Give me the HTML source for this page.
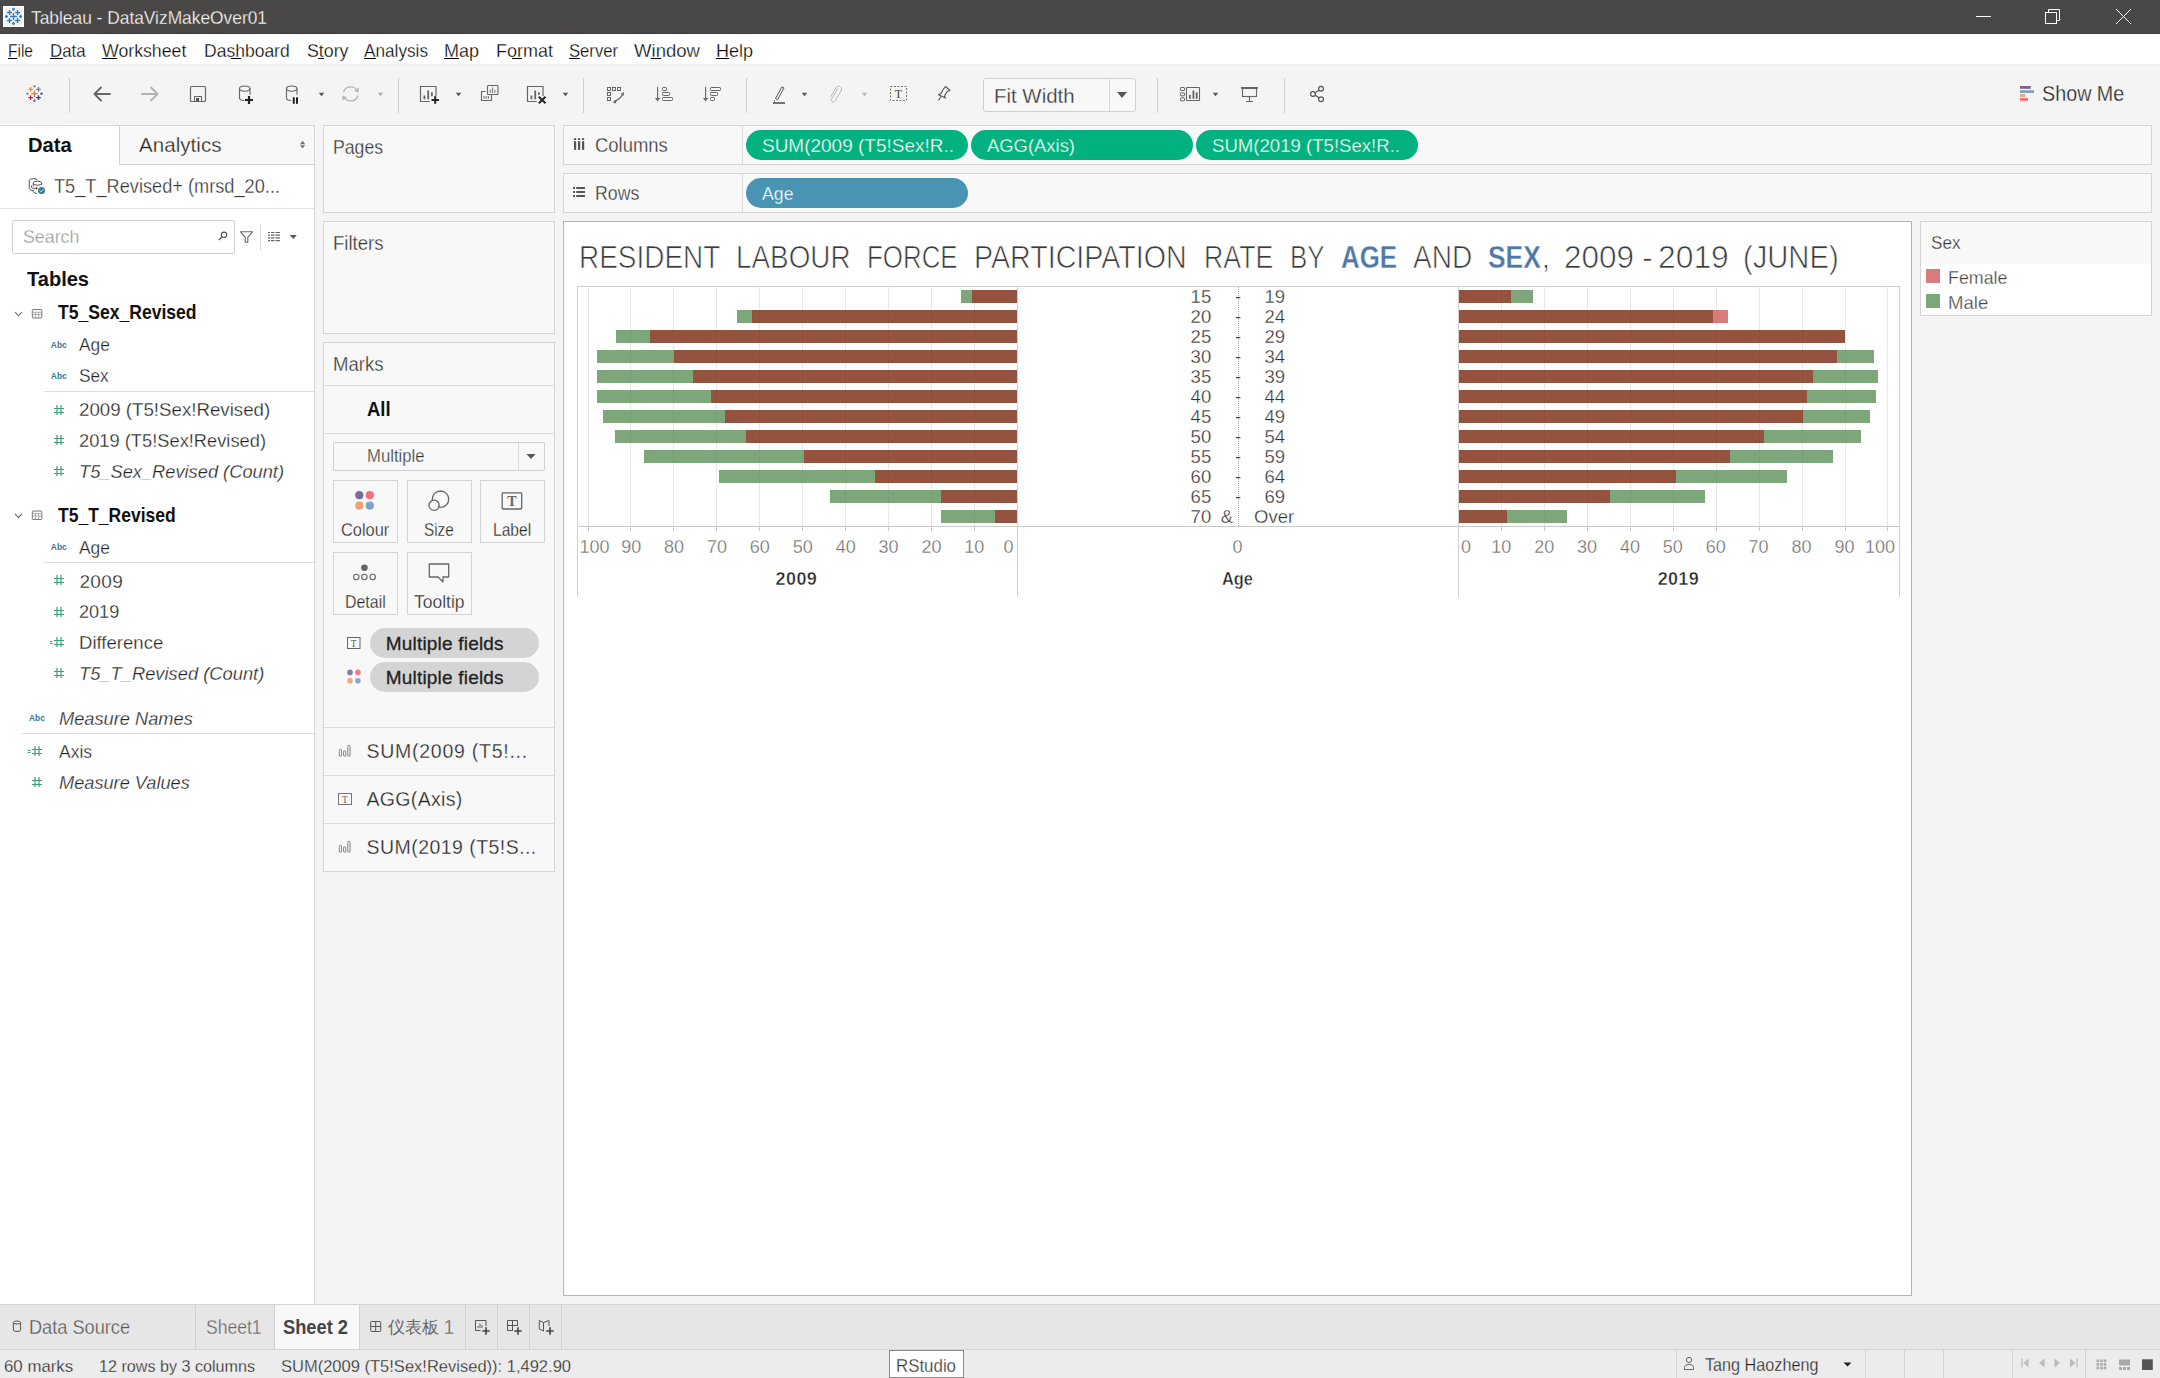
<!DOCTYPE html><html><head><meta charset="utf-8"><style>
html,body{margin:0;padding:0;}
body{width:2160px;height:1378px;overflow:hidden;position:relative;background:#f4f4f4;font-family:"Liberation Sans",sans-serif;}
.a{position:absolute;}
.t{position:absolute;white-space:nowrap;line-height:1;}
svg{position:absolute;overflow:visible;}
</style></head><body>
<div class="a" style="left:0px;top:0px;width:2160px;height:34px;background:#4a4846;"></div>
<div class="a" style="left:0px;top:33px;width:2160px;height:1px;background:#3d3b39;"></div>
<div class="a" style="left:0px;top:34px;width:2160px;height:30px;background:#ffffff;"></div>
<div class="a" style="left:0px;top:64px;width:2160px;height:1px;background:#efefef;"></div>
<div class="a" style="left:0px;top:65px;width:2160px;height:60px;background:#f4f4f4;"></div>
<div class="a" style="left:0px;top:125px;width:315px;height:1179px;background:#ffffff;"></div>
<div class="a" style="left:0px;top:125px;width:315px;height:1px;background:#d9d9d9;"></div>
<div class="a" style="left:314px;top:125px;width:1px;height:1179px;background:#d4d4d4;"></div>
<div class="a" style="left:119px;top:125px;width:196px;height:40px;background:#f8f8f8;border:1px solid #d4d4d4;box-sizing:border-box;"></div>
<div class="a" style="left:0px;top:208px;width:314px;height:1px;background:#e3e3e3;"></div>
<div class="a" style="left:12px;top:220px;width:223px;height:34px;background:#ffffff;border:1px solid #d0d0d0;box-sizing:border-box;border-radius:2px;"></div>
<div class="a" style="left:260px;top:224px;width:1px;height:26px;background:#d6d6d6;"></div>
<div class="a" style="left:44px;top:391px;width:270px;height:1px;background:#e0e0e0;"></div>
<div class="a" style="left:44px;top:562px;width:270px;height:1px;background:#e0e0e0;"></div>
<div class="a" style="left:22px;top:733px;width:292px;height:1px;background:#e0e0e0;"></div>
<div class="a" style="left:323px;top:125px;width:232px;height:88px;background:#f8f8f8;border:1px solid #d4d4d4;box-sizing:border-box;"></div>
<div class="a" style="left:323px;top:221px;width:232px;height:113px;background:#f8f8f8;border:1px solid #d4d4d4;box-sizing:border-box;"></div>
<div class="a" style="left:323px;top:342px;width:232px;height:530px;background:#f8f8f8;border:1px solid #d4d4d4;box-sizing:border-box;"></div>
<div class="a" style="left:324px;top:385px;width:230px;height:1px;background:#dcdcdc;"></div>
<div class="a" style="left:324px;top:433px;width:230px;height:1px;background:#dcdcdc;"></div>
<div class="a" style="left:324px;top:727px;width:230px;height:1px;background:#dcdcdc;"></div>
<div class="a" style="left:324px;top:775px;width:230px;height:1px;background:#dcdcdc;"></div>
<div class="a" style="left:324px;top:823px;width:230px;height:1px;background:#dcdcdc;"></div>
<div class="a" style="left:333px;top:442px;width:212px;height:29px;background:#f8f8f8;border:1px solid #cfcfcf;box-sizing:border-box;border-radius:2px;"></div>
<div class="a" style="left:518px;top:443px;width:1px;height:27px;background:#dcdcdc;"></div>
<div class="a" style="left:333px;top:480px;width:65px;height:63px;background:#f8f8f8;border:1px solid #d4d4d4;box-sizing:border-box;"></div>
<div class="a" style="left:407px;top:480px;width:65px;height:63px;background:#f8f8f8;border:1px solid #d4d4d4;box-sizing:border-box;"></div>
<div class="a" style="left:480px;top:480px;width:65px;height:63px;background:#f8f8f8;border:1px solid #d4d4d4;box-sizing:border-box;"></div>
<div class="a" style="left:333px;top:552px;width:65px;height:63px;background:#f8f8f8;border:1px solid #d4d4d4;box-sizing:border-box;"></div>
<div class="a" style="left:407px;top:552px;width:65px;height:63px;background:#f8f8f8;border:1px solid #d4d4d4;box-sizing:border-box;"></div>
<div class="a" style="left:370px;top:628px;width:169px;height:30px;background:#d4d4d4;border-radius:15px;"></div>
<div class="a" style="left:370px;top:662px;width:169px;height:30px;background:#d4d4d4;border-radius:15px;"></div>
<div class="a" style="left:563px;top:125px;width:1589px;height:40px;background:#f8f8f8;border:1px solid #d4d4d4;box-sizing:border-box;"></div>
<div class="a" style="left:742px;top:126px;width:1px;height:38px;background:#dcdcdc;"></div>
<div class="a" style="left:563px;top:173px;width:1589px;height:40px;background:#f8f8f8;border:1px solid #d4d4d4;box-sizing:border-box;"></div>
<div class="a" style="left:742px;top:174px;width:1px;height:38px;background:#dcdcdc;"></div>
<div class="a" style="left:746px;top:130px;width:222px;height:30px;background:#02b180;border-radius:15px;"></div>
<div class="a" style="left:971px;top:130px;width:222px;height:30px;background:#02b180;border-radius:15px;"></div>
<div class="a" style="left:1196px;top:130px;width:222px;height:30px;background:#02b180;border-radius:15px;"></div>
<div class="a" style="left:746px;top:178px;width:222px;height:30px;background:#4a94b3;border-radius:15px;"></div>
<div class="a" style="left:563px;top:221px;width:1349px;height:1075px;background:#ffffff;border:1px solid #b4b4b4;box-sizing:border-box;"></div>
<div class="a" style="left:1920px;top:221px;width:232px;height:95px;background:#ffffff;border:1px solid #d4d4d4;box-sizing:border-box;"></div>
<div class="a" style="left:1921px;top:222px;width:230px;height:42px;background:#f8f8f8;"></div>
<div class="a" style="left:0px;top:1304px;width:2160px;height:45px;background:#e6e6e6;"></div>
<div class="a" style="left:0px;top:1304px;width:2160px;height:1px;background:#d4d4d4;"></div>
<div class="a" style="left:275px;top:1305px;width:84px;height:44px;background:#f8f8f8;"></div>
<div class="a" style="left:195px;top:1305px;width:1px;height:44px;background:#d0d0d0;"></div>
<div class="a" style="left:274px;top:1305px;width:1px;height:44px;background:#d0d0d0;"></div>
<div class="a" style="left:359px;top:1305px;width:1px;height:44px;background:#d0d0d0;"></div>
<div class="a" style="left:465px;top:1305px;width:1px;height:44px;background:#d0d0d0;"></div>
<div class="a" style="left:497px;top:1305px;width:1px;height:44px;background:#d0d0d0;"></div>
<div class="a" style="left:529px;top:1305px;width:1px;height:44px;background:#d0d0d0;"></div>
<div class="a" style="left:561px;top:1305px;width:1px;height:44px;background:#d0d0d0;"></div>
<div class="a" style="left:0px;top:1349px;width:2160px;height:29px;background:#ececec;"></div>
<div class="a" style="left:0px;top:1349px;width:2160px;height:1px;background:#d4d4d4;"></div>
<div class="a" style="left:1676px;top:1350px;width:1px;height:28px;background:#d4d4d4;"></div>
<div class="a" style="left:1865px;top:1350px;width:1px;height:28px;background:#d4d4d4;"></div>
<div class="a" style="left:1904px;top:1350px;width:1px;height:28px;background:#d4d4d4;"></div>
<div class="a" style="left:1943px;top:1350px;width:1px;height:28px;background:#d4d4d4;"></div>
<div class="a" style="left:2012px;top:1350px;width:1px;height:28px;background:#d4d4d4;"></div>
<div class="a" style="left:2085px;top:1350px;width:1px;height:28px;background:#d4d4d4;"></div>
<div class="a" style="left:889px;top:1350px;width:75px;height:28px;background:#ffffff;border:1px solid #8a8a8a;box-sizing:border-box;"></div>
<div class="a" style="left:974px;top:287px;width:1px;height:240px;background:#f1f1f1;"></div>
<div class="a" style="left:1501px;top:287px;width:1px;height:240px;background:#f1f1f1;"></div>
<div class="a" style="left:931px;top:287px;width:1px;height:240px;background:#f1f1f1;"></div>
<div class="a" style="left:1544px;top:287px;width:1px;height:240px;background:#f1f1f1;"></div>
<div class="a" style="left:888px;top:287px;width:1px;height:240px;background:#f1f1f1;"></div>
<div class="a" style="left:1587px;top:287px;width:1px;height:240px;background:#f1f1f1;"></div>
<div class="a" style="left:845px;top:287px;width:1px;height:240px;background:#f1f1f1;"></div>
<div class="a" style="left:1630px;top:287px;width:1px;height:240px;background:#f1f1f1;"></div>
<div class="a" style="left:802px;top:287px;width:1px;height:240px;background:#f1f1f1;"></div>
<div class="a" style="left:1673px;top:287px;width:1px;height:240px;background:#f1f1f1;"></div>
<div class="a" style="left:759px;top:287px;width:1px;height:240px;background:#f1f1f1;"></div>
<div class="a" style="left:1716px;top:287px;width:1px;height:240px;background:#f1f1f1;"></div>
<div class="a" style="left:716px;top:287px;width:1px;height:240px;background:#f1f1f1;"></div>
<div class="a" style="left:1759px;top:287px;width:1px;height:240px;background:#f1f1f1;"></div>
<div class="a" style="left:673px;top:287px;width:1px;height:240px;background:#f1f1f1;"></div>
<div class="a" style="left:1802px;top:287px;width:1px;height:240px;background:#f1f1f1;"></div>
<div class="a" style="left:630px;top:287px;width:1px;height:240px;background:#f1f1f1;"></div>
<div class="a" style="left:1845px;top:287px;width:1px;height:240px;background:#f1f1f1;"></div>
<div class="a" style="left:588px;top:287px;width:1px;height:240px;background:#f1f1f1;"></div>
<div class="a" style="left:1887px;top:287px;width:1px;height:240px;background:#f1f1f1;"></div>
<div class="a" style="left:961px;top:290px;width:11px;height:13px;background:#7da77b;"></div>
<div class="a" style="left:972px;top:290px;width:45px;height:13px;background:#93533f;"></div>
<div class="a" style="left:737px;top:310px;width:15px;height:13px;background:#7da77b;"></div>
<div class="a" style="left:752px;top:310px;width:265px;height:13px;background:#93533f;"></div>
<div class="a" style="left:616px;top:330px;width:34px;height:13px;background:#7da77b;"></div>
<div class="a" style="left:650px;top:330px;width:367px;height:13px;background:#93533f;"></div>
<div class="a" style="left:597px;top:350px;width:77px;height:13px;background:#7da77b;"></div>
<div class="a" style="left:674px;top:350px;width:343px;height:13px;background:#93533f;"></div>
<div class="a" style="left:597px;top:370px;width:96px;height:13px;background:#7da77b;"></div>
<div class="a" style="left:693px;top:370px;width:324px;height:13px;background:#93533f;"></div>
<div class="a" style="left:597px;top:390px;width:114px;height:13px;background:#7da77b;"></div>
<div class="a" style="left:711px;top:390px;width:306px;height:13px;background:#93533f;"></div>
<div class="a" style="left:603px;top:410px;width:122px;height:13px;background:#7da77b;"></div>
<div class="a" style="left:725px;top:410px;width:292px;height:13px;background:#93533f;"></div>
<div class="a" style="left:615px;top:430px;width:131px;height:13px;background:#7da77b;"></div>
<div class="a" style="left:746px;top:430px;width:271px;height:13px;background:#93533f;"></div>
<div class="a" style="left:644px;top:450px;width:160px;height:13px;background:#7da77b;"></div>
<div class="a" style="left:804px;top:450px;width:213px;height:13px;background:#93533f;"></div>
<div class="a" style="left:719px;top:470px;width:156px;height:13px;background:#7da77b;"></div>
<div class="a" style="left:875px;top:470px;width:142px;height:13px;background:#93533f;"></div>
<div class="a" style="left:830px;top:490px;width:111px;height:13px;background:#7da77b;"></div>
<div class="a" style="left:941px;top:490px;width:76px;height:13px;background:#93533f;"></div>
<div class="a" style="left:941px;top:510px;width:54px;height:13px;background:#7da77b;"></div>
<div class="a" style="left:995px;top:510px;width:22px;height:13px;background:#93533f;"></div>
<div class="a" style="left:1459px;top:290px;width:52px;height:13px;background:#93533f;"></div>
<div class="a" style="left:1511px;top:290px;width:22px;height:13px;background:#7da77b;"></div>
<div class="a" style="left:1459px;top:310px;width:254px;height:13px;background:#93533f;"></div>
<div class="a" style="left:1713px;top:310px;width:15px;height:13px;background:#d87b7c;"></div>
<div class="a" style="left:1459px;top:330px;width:386px;height:13px;background:#93533f;"></div>
<div class="a" style="left:1459px;top:350px;width:378px;height:13px;background:#93533f;"></div>
<div class="a" style="left:1837px;top:350px;width:37px;height:13px;background:#7da77b;"></div>
<div class="a" style="left:1459px;top:370px;width:354px;height:13px;background:#93533f;"></div>
<div class="a" style="left:1813px;top:370px;width:65px;height:13px;background:#7da77b;"></div>
<div class="a" style="left:1459px;top:390px;width:348px;height:13px;background:#93533f;"></div>
<div class="a" style="left:1807px;top:390px;width:69px;height:13px;background:#7da77b;"></div>
<div class="a" style="left:1459px;top:410px;width:344px;height:13px;background:#93533f;"></div>
<div class="a" style="left:1803px;top:410px;width:67px;height:13px;background:#7da77b;"></div>
<div class="a" style="left:1459px;top:430px;width:305px;height:13px;background:#93533f;"></div>
<div class="a" style="left:1764px;top:430px;width:97px;height:13px;background:#7da77b;"></div>
<div class="a" style="left:1459px;top:450px;width:271px;height:13px;background:#93533f;"></div>
<div class="a" style="left:1730px;top:450px;width:103px;height:13px;background:#7da77b;"></div>
<div class="a" style="left:1459px;top:470px;width:217px;height:13px;background:#93533f;"></div>
<div class="a" style="left:1676px;top:470px;width:111px;height:13px;background:#7da77b;"></div>
<div class="a" style="left:1459px;top:490px;width:151px;height:13px;background:#93533f;"></div>
<div class="a" style="left:1610px;top:490px;width:95px;height:13px;background:#7da77b;"></div>
<div class="a" style="left:1459px;top:510px;width:48px;height:13px;background:#93533f;"></div>
<div class="a" style="left:1507px;top:510px;width:60px;height:13px;background:#7da77b;"></div>
<div class="a" style="left:974px;top:287px;width:1px;height:240px;background:rgba(0,0,0,0.03);"></div>
<div class="a" style="left:1501px;top:287px;width:1px;height:240px;background:rgba(0,0,0,0.03);"></div>
<div class="a" style="left:931px;top:287px;width:1px;height:240px;background:rgba(0,0,0,0.03);"></div>
<div class="a" style="left:1544px;top:287px;width:1px;height:240px;background:rgba(0,0,0,0.03);"></div>
<div class="a" style="left:888px;top:287px;width:1px;height:240px;background:rgba(0,0,0,0.03);"></div>
<div class="a" style="left:1587px;top:287px;width:1px;height:240px;background:rgba(0,0,0,0.03);"></div>
<div class="a" style="left:845px;top:287px;width:1px;height:240px;background:rgba(0,0,0,0.03);"></div>
<div class="a" style="left:1630px;top:287px;width:1px;height:240px;background:rgba(0,0,0,0.03);"></div>
<div class="a" style="left:802px;top:287px;width:1px;height:240px;background:rgba(0,0,0,0.03);"></div>
<div class="a" style="left:1673px;top:287px;width:1px;height:240px;background:rgba(0,0,0,0.03);"></div>
<div class="a" style="left:759px;top:287px;width:1px;height:240px;background:rgba(0,0,0,0.03);"></div>
<div class="a" style="left:1716px;top:287px;width:1px;height:240px;background:rgba(0,0,0,0.03);"></div>
<div class="a" style="left:716px;top:287px;width:1px;height:240px;background:rgba(0,0,0,0.03);"></div>
<div class="a" style="left:1759px;top:287px;width:1px;height:240px;background:rgba(0,0,0,0.03);"></div>
<div class="a" style="left:673px;top:287px;width:1px;height:240px;background:rgba(0,0,0,0.03);"></div>
<div class="a" style="left:1802px;top:287px;width:1px;height:240px;background:rgba(0,0,0,0.03);"></div>
<div class="a" style="left:630px;top:287px;width:1px;height:240px;background:rgba(0,0,0,0.03);"></div>
<div class="a" style="left:1845px;top:287px;width:1px;height:240px;background:rgba(0,0,0,0.03);"></div>
<div class="a" style="left:588px;top:287px;width:1px;height:240px;background:rgba(0,0,0,0.03);"></div>
<div class="a" style="left:1887px;top:287px;width:1px;height:240px;background:rgba(0,0,0,0.03);"></div>
<div class="a" style="left:577px;top:286px;width:1323px;height:1px;background:#d0d0d0;"></div>
<div class="a" style="left:577px;top:526px;width:1323px;height:1px;background:#c8c8c8;"></div>
<div class="a" style="left:577px;top:286px;width:1px;height:311px;background:#d0d0d0;"></div>
<div class="a" style="left:1017px;top:286px;width:1px;height:311px;background:#d0d0d0;"></div>
<div class="a" style="left:1458px;top:286px;width:1px;height:311px;background:#d0d0d0;"></div>
<div class="a" style="left:1899px;top:286px;width:1px;height:311px;background:#d0d0d0;"></div>
<div class="a" style="left:1017px;top:527px;width:1px;height:4px;background:#c8c8c8;"></div>
<div class="a" style="left:1458px;top:527px;width:1px;height:4px;background:#c8c8c8;"></div>
<div class="a" style="left:974px;top:527px;width:1px;height:4px;background:#c8c8c8;"></div>
<div class="a" style="left:1501px;top:527px;width:1px;height:4px;background:#c8c8c8;"></div>
<div class="a" style="left:931px;top:527px;width:1px;height:4px;background:#c8c8c8;"></div>
<div class="a" style="left:1544px;top:527px;width:1px;height:4px;background:#c8c8c8;"></div>
<div class="a" style="left:888px;top:527px;width:1px;height:4px;background:#c8c8c8;"></div>
<div class="a" style="left:1587px;top:527px;width:1px;height:4px;background:#c8c8c8;"></div>
<div class="a" style="left:845px;top:527px;width:1px;height:4px;background:#c8c8c8;"></div>
<div class="a" style="left:1630px;top:527px;width:1px;height:4px;background:#c8c8c8;"></div>
<div class="a" style="left:802px;top:527px;width:1px;height:4px;background:#c8c8c8;"></div>
<div class="a" style="left:1673px;top:527px;width:1px;height:4px;background:#c8c8c8;"></div>
<div class="a" style="left:759px;top:527px;width:1px;height:4px;background:#c8c8c8;"></div>
<div class="a" style="left:1716px;top:527px;width:1px;height:4px;background:#c8c8c8;"></div>
<div class="a" style="left:716px;top:527px;width:1px;height:4px;background:#c8c8c8;"></div>
<div class="a" style="left:1759px;top:527px;width:1px;height:4px;background:#c8c8c8;"></div>
<div class="a" style="left:673px;top:527px;width:1px;height:4px;background:#c8c8c8;"></div>
<div class="a" style="left:1802px;top:527px;width:1px;height:4px;background:#c8c8c8;"></div>
<div class="a" style="left:630px;top:527px;width:1px;height:4px;background:#c8c8c8;"></div>
<div class="a" style="left:1845px;top:527px;width:1px;height:4px;background:#c8c8c8;"></div>
<div class="a" style="left:588px;top:527px;width:1px;height:4px;background:#c8c8c8;"></div>
<div class="a" style="left:1887px;top:527px;width:1px;height:4px;background:#c8c8c8;"></div>
<div class="a" style="left:1238px;top:287px;width:0;height:239px;border-left:1px dotted #b0b0b0;"></div>
<div class="t" style="left:1190.62px;top:287.64px;font-size:18.5px;color:#333;-webkit-text-stroke:0.3px #ffffff;">15</div>
<div class="t" style="left:1234.92px;top:287.64px;font-size:18.5px;color:#333;-webkit-text-stroke:0.3px #ffffff;">-</div>
<div class="t" style="left:1264.50px;top:287.64px;font-size:18.5px;color:#333;-webkit-text-stroke:0.3px #ffffff;">19</div>
<div class="t" style="left:1190.62px;top:307.64px;font-size:18.5px;color:#333;-webkit-text-stroke:0.3px #ffffff;">20</div>
<div class="t" style="left:1234.92px;top:307.64px;font-size:18.5px;color:#333;-webkit-text-stroke:0.3px #ffffff;">-</div>
<div class="t" style="left:1264.50px;top:307.64px;font-size:18.5px;color:#333;-webkit-text-stroke:0.3px #ffffff;">24</div>
<div class="t" style="left:1190.62px;top:327.64px;font-size:18.5px;color:#333;-webkit-text-stroke:0.3px #ffffff;">25</div>
<div class="t" style="left:1234.92px;top:327.64px;font-size:18.5px;color:#333;-webkit-text-stroke:0.3px #ffffff;">-</div>
<div class="t" style="left:1264.50px;top:327.64px;font-size:18.5px;color:#333;-webkit-text-stroke:0.3px #ffffff;">29</div>
<div class="t" style="left:1190.62px;top:347.64px;font-size:18.5px;color:#333;-webkit-text-stroke:0.3px #ffffff;">30</div>
<div class="t" style="left:1234.92px;top:347.64px;font-size:18.5px;color:#333;-webkit-text-stroke:0.3px #ffffff;">-</div>
<div class="t" style="left:1264.50px;top:347.64px;font-size:18.5px;color:#333;-webkit-text-stroke:0.3px #ffffff;">34</div>
<div class="t" style="left:1190.62px;top:367.64px;font-size:18.5px;color:#333;-webkit-text-stroke:0.3px #ffffff;">35</div>
<div class="t" style="left:1234.92px;top:367.64px;font-size:18.5px;color:#333;-webkit-text-stroke:0.3px #ffffff;">-</div>
<div class="t" style="left:1264.50px;top:367.64px;font-size:18.5px;color:#333;-webkit-text-stroke:0.3px #ffffff;">39</div>
<div class="t" style="left:1190.62px;top:387.64px;font-size:18.5px;color:#333;-webkit-text-stroke:0.3px #ffffff;">40</div>
<div class="t" style="left:1234.92px;top:387.64px;font-size:18.5px;color:#333;-webkit-text-stroke:0.3px #ffffff;">-</div>
<div class="t" style="left:1264.50px;top:387.64px;font-size:18.5px;color:#333;-webkit-text-stroke:0.3px #ffffff;">44</div>
<div class="t" style="left:1190.62px;top:407.64px;font-size:18.5px;color:#333;-webkit-text-stroke:0.3px #ffffff;">45</div>
<div class="t" style="left:1234.92px;top:407.64px;font-size:18.5px;color:#333;-webkit-text-stroke:0.3px #ffffff;">-</div>
<div class="t" style="left:1264.50px;top:407.64px;font-size:18.5px;color:#333;-webkit-text-stroke:0.3px #ffffff;">49</div>
<div class="t" style="left:1190.62px;top:427.64px;font-size:18.5px;color:#333;-webkit-text-stroke:0.3px #ffffff;">50</div>
<div class="t" style="left:1234.92px;top:427.64px;font-size:18.5px;color:#333;-webkit-text-stroke:0.3px #ffffff;">-</div>
<div class="t" style="left:1264.50px;top:427.64px;font-size:18.5px;color:#333;-webkit-text-stroke:0.3px #ffffff;">54</div>
<div class="t" style="left:1190.62px;top:447.64px;font-size:18.5px;color:#333;-webkit-text-stroke:0.3px #ffffff;">55</div>
<div class="t" style="left:1234.92px;top:447.64px;font-size:18.5px;color:#333;-webkit-text-stroke:0.3px #ffffff;">-</div>
<div class="t" style="left:1264.50px;top:447.64px;font-size:18.5px;color:#333;-webkit-text-stroke:0.3px #ffffff;">59</div>
<div class="t" style="left:1190.62px;top:467.64px;font-size:18.5px;color:#333;-webkit-text-stroke:0.3px #ffffff;">60</div>
<div class="t" style="left:1234.92px;top:467.64px;font-size:18.5px;color:#333;-webkit-text-stroke:0.3px #ffffff;">-</div>
<div class="t" style="left:1264.50px;top:467.64px;font-size:18.5px;color:#333;-webkit-text-stroke:0.3px #ffffff;">64</div>
<div class="t" style="left:1190.62px;top:487.64px;font-size:18.5px;color:#333;-webkit-text-stroke:0.3px #ffffff;">65</div>
<div class="t" style="left:1234.92px;top:487.64px;font-size:18.5px;color:#333;-webkit-text-stroke:0.3px #ffffff;">-</div>
<div class="t" style="left:1264.50px;top:487.64px;font-size:18.5px;color:#333;-webkit-text-stroke:0.3px #ffffff;">69</div>
<div class="t" style="left:1190.62px;top:507.64px;font-size:18.5px;color:#333;-webkit-text-stroke:0.3px #ffffff;">70</div>
<div class="t" style="left:1220.83px;top:507.64px;font-size:18.5px;color:#333;-webkit-text-stroke:0.3px #ffffff;">&amp;</div>
<div class="t" style="left:1254.00px;top:507.64px;font-size:18.5px;color:#333;-webkit-text-stroke:0.3px #ffffff;">Over</div>
<div class="t" style="left:1003.39px;top:538.06px;font-size:18px;color:#6e6e6e;-webkit-text-stroke:0.3px #ffffff;">0</div>
<div class="t" style="left:1461.00px;top:538.06px;font-size:18px;color:#6e6e6e;-webkit-text-stroke:0.3px #ffffff;">0</div>
<div class="t" style="left:964.30px;top:538.06px;font-size:18px;color:#6e6e6e;-webkit-text-stroke:0.3px #ffffff;">10</div>
<div class="t" style="left:1491.28px;top:538.06px;font-size:18px;color:#6e6e6e;-webkit-text-stroke:0.3px #ffffff;">10</div>
<div class="t" style="left:921.41px;top:538.06px;font-size:18px;color:#6e6e6e;-webkit-text-stroke:0.3px #ffffff;">20</div>
<div class="t" style="left:1534.17px;top:538.06px;font-size:18px;color:#6e6e6e;-webkit-text-stroke:0.3px #ffffff;">20</div>
<div class="t" style="left:878.52px;top:538.06px;font-size:18px;color:#6e6e6e;-webkit-text-stroke:0.3px #ffffff;">30</div>
<div class="t" style="left:1577.06px;top:538.06px;font-size:18px;color:#6e6e6e;-webkit-text-stroke:0.3px #ffffff;">30</div>
<div class="t" style="left:835.63px;top:538.06px;font-size:18px;color:#6e6e6e;-webkit-text-stroke:0.3px #ffffff;">40</div>
<div class="t" style="left:1619.95px;top:538.06px;font-size:18px;color:#6e6e6e;-webkit-text-stroke:0.3px #ffffff;">40</div>
<div class="t" style="left:792.74px;top:538.06px;font-size:18px;color:#6e6e6e;-webkit-text-stroke:0.3px #ffffff;">50</div>
<div class="t" style="left:1662.84px;top:538.06px;font-size:18px;color:#6e6e6e;-webkit-text-stroke:0.3px #ffffff;">50</div>
<div class="t" style="left:749.85px;top:538.06px;font-size:18px;color:#6e6e6e;-webkit-text-stroke:0.3px #ffffff;">60</div>
<div class="t" style="left:1705.73px;top:538.06px;font-size:18px;color:#6e6e6e;-webkit-text-stroke:0.3px #ffffff;">60</div>
<div class="t" style="left:706.96px;top:538.06px;font-size:18px;color:#6e6e6e;-webkit-text-stroke:0.3px #ffffff;">70</div>
<div class="t" style="left:1748.62px;top:538.06px;font-size:18px;color:#6e6e6e;-webkit-text-stroke:0.3px #ffffff;">70</div>
<div class="t" style="left:664.07px;top:538.06px;font-size:18px;color:#6e6e6e;-webkit-text-stroke:0.3px #ffffff;">80</div>
<div class="t" style="left:1791.51px;top:538.06px;font-size:18px;color:#6e6e6e;-webkit-text-stroke:0.3px #ffffff;">80</div>
<div class="t" style="left:621.18px;top:538.06px;font-size:18px;color:#6e6e6e;-webkit-text-stroke:0.3px #ffffff;">90</div>
<div class="t" style="left:1834.40px;top:538.06px;font-size:18px;color:#6e6e6e;-webkit-text-stroke:0.3px #ffffff;">90</div>
<div class="t" style="left:579.60px;top:538.06px;font-size:18px;color:#6e6e6e;-webkit-text-stroke:0.3px #ffffff;">100</div>
<div class="t" style="left:1865.07px;top:538.06px;font-size:18px;color:#6e6e6e;-webkit-text-stroke:0.3px #ffffff;">100</div>
<div class="t" style="left:1232.49px;top:538.06px;font-size:18px;color:#6e6e6e;-webkit-text-stroke:0.3px #ffffff;">0</div>
<div class="t" style="left:775.55px;top:570.06px;font-size:18px;color:#222;font-weight:bold;letter-spacing:0.416px;-webkit-text-stroke:0.45px #fff;">2009</div>
<div class="t" style="left:1222.00px;top:570.06px;font-size:18px;color:#222;font-weight:bold;transform:scaleX(0.9116);transform-origin:0 0;-webkit-text-stroke:0.45px #fff;">Age</div>
<div class="t" style="left:1657.80px;top:570.06px;font-size:18px;color:#222;font-weight:bold;letter-spacing:0.273px;-webkit-text-stroke:0.45px #fff;">2019</div>
<div class="t" style="left:579.00px;top:241.41px;font-size:32px;color:#3b3b3b;transform:scaleX(0.8733);transform-origin:0 0;-webkit-text-stroke:0.7px #fff;paint-order:normal;">RESIDENT</div>
<div class="t" style="left:736.20px;top:241.41px;font-size:32px;color:#3b3b3b;transform:scaleX(0.8701);transform-origin:0 0;-webkit-text-stroke:0.7px #fff;paint-order:normal;">LABOUR</div>
<div class="t" style="left:866.60px;top:241.41px;font-size:32px;color:#3b3b3b;transform:scaleX(0.8089);transform-origin:0 0;-webkit-text-stroke:0.7px #fff;paint-order:normal;">FORCE</div>
<div class="t" style="left:973.90px;top:241.41px;font-size:32px;color:#3b3b3b;transform:scaleX(0.8946);transform-origin:0 0;-webkit-text-stroke:0.7px #fff;paint-order:normal;">PARTICIPATION</div>
<div class="t" style="left:1204.40px;top:241.41px;font-size:32px;color:#3b3b3b;transform:scaleX(0.8353);transform-origin:0 0;-webkit-text-stroke:0.7px #fff;paint-order:normal;">RATE</div>
<div class="t" style="left:1290.00px;top:241.41px;font-size:32px;color:#3b3b3b;transform:scaleX(0.8105);transform-origin:0 0;-webkit-text-stroke:0.7px #fff;paint-order:normal;">BY</div>
<div class="t" style="left:1340.60px;top:241.41px;font-size:32px;color:#4e79a7;font-weight:bold;transform:scaleX(0.8076);transform-origin:0 0;-webkit-text-stroke:0.3px #fff;">AGE</div>
<div class="t" style="left:1412.80px;top:241.41px;font-size:32px;color:#3b3b3b;transform:scaleX(0.8762);transform-origin:0 0;-webkit-text-stroke:0.7px #fff;paint-order:normal;">AND</div>
<div class="t" style="left:1488.30px;top:241.41px;font-size:32px;color:#4e79a7;font-weight:bold;transform:scaleX(0.8230);transform-origin:0 0;-webkit-text-stroke:0.3px #fff;">SEX</div>
<div class="t" style="left:1541.50px;top:241.41px;font-size:32px;color:#3b3b3b;-webkit-text-stroke:0.7px #fff;paint-order:normal;">,</div>
<div class="t" style="left:1564.20px;top:241.41px;font-size:32px;color:#3b3b3b;transform:scaleX(0.9833);transform-origin:0 0;-webkit-text-stroke:0.7px #fff;paint-order:normal;">2009</div>
<div class="t" style="left:1642.00px;top:241.41px;font-size:32px;color:#3b3b3b;-webkit-text-stroke:0.7px #fff;paint-order:normal;">-</div>
<div class="t" style="left:1658.00px;top:241.41px;font-size:32px;color:#3b3b3b;transform:scaleX(0.9946);transform-origin:0 0;-webkit-text-stroke:0.7px #fff;paint-order:normal;">2019</div>
<div class="t" style="left:1743.40px;top:241.41px;font-size:32px;color:#3b3b3b;transform:scaleX(0.9116);transform-origin:0 0;-webkit-text-stroke:0.7px #fff;paint-order:normal;">(JUNE)</div>
<div class="t" style="left:1930.70px;top:233.41px;font-size:19px;color:#333;transform:scaleX(0.9010);transform-origin:0 0;-webkit-text-stroke:0.3px #f8f8f8;">Sex</div>
<div class="a" style="left:1926px;top:269px;width:14px;height:14px;background:#d87b7c;"></div>
<div class="a" style="left:1926px;top:294px;width:14px;height:14px;background:#7aa87a;"></div>
<div class="t" style="left:1948.00px;top:268.41px;font-size:19px;color:#444;transform:scaleX(0.9391);transform-origin:0 0;-webkit-text-stroke:0.3px #ffffff;">Female</div>
<div class="t" style="left:1948.00px;top:293.01px;font-size:19px;color:#444;transform:scaleX(0.9761);transform-origin:0 0;-webkit-text-stroke:0.3px #ffffff;">Male</div>
<div class="t" style="left:31.00px;top:9.34px;font-size:18.5px;color:#ffffff;transform:scaleX(0.9380);transform-origin:0 0;-webkit-text-stroke:0.3px #4a4846;">Tableau - DataVizMakeOver01</div>
<div class="t" style="left:8.30px;top:41.84px;font-size:18.5px;color:#000;transform:scaleX(0.8387);transform-origin:0 0;-webkit-text-stroke:0.3px #ffffff;">File</div>
<div class="t" style="left:50.40px;top:41.84px;font-size:18.5px;color:#000;transform:scaleX(0.9110);transform-origin:0 0;-webkit-text-stroke:0.3px #ffffff;">Data</div>
<div class="t" style="left:102.40px;top:41.84px;font-size:18.5px;color:#000;transform:scaleX(0.9570);transform-origin:0 0;-webkit-text-stroke:0.3px #ffffff;">Worksheet</div>
<div class="t" style="left:203.70px;top:41.84px;font-size:18.5px;color:#000;transform:scaleX(0.9469);transform-origin:0 0;-webkit-text-stroke:0.3px #ffffff;">Dashboard</div>
<div class="t" style="left:306.50px;top:41.84px;font-size:18.5px;color:#000;transform:scaleX(0.9611);transform-origin:0 0;-webkit-text-stroke:0.3px #ffffff;">Story</div>
<div class="t" style="left:364.00px;top:41.84px;font-size:18.5px;color:#000;transform:scaleX(0.9291);transform-origin:0 0;-webkit-text-stroke:0.3px #ffffff;">Analysis</div>
<div class="t" style="left:444.00px;top:41.84px;font-size:18.5px;color:#000;transform:scaleX(0.9725);transform-origin:0 0;-webkit-text-stroke:0.3px #ffffff;">Map</div>
<div class="t" style="left:496.00px;top:41.84px;font-size:18.5px;color:#000;transform:scaleX(0.9729);transform-origin:0 0;-webkit-text-stroke:0.3px #ffffff;">Format</div>
<div class="t" style="left:569.00px;top:41.84px;font-size:18.5px;color:#000;transform:scaleX(0.8993);transform-origin:0 0;-webkit-text-stroke:0.3px #ffffff;">Server</div>
<div class="t" style="left:634.00px;top:41.84px;font-size:18.5px;color:#000;letter-spacing:0.037px;-webkit-text-stroke:0.3px #ffffff;">Window</div>
<div class="t" style="left:716.00px;top:41.84px;font-size:18.5px;color:#000;transform:scaleX(0.9725);transform-origin:0 0;-webkit-text-stroke:0.3px #ffffff;">Help</div>
<div class="a" style="left:983px;top:78px;width:153px;height:34px;background:#f8f8f8;border:1px solid #cfcfcf;box-sizing:border-box;border-radius:3px;"></div>
<div class="a" style="left:1109px;top:79px;width:1px;height:32px;background:#d8d8d8;"></div>
<div class="t" style="left:994.40px;top:85.22px;font-size:21px;color:#333;transform:scaleX(0.9729);transform-origin:0 0;-webkit-text-stroke:0.3px #f4f4f4;">Fit Width</div>
<div class="t" style="left:2041.70px;top:83.60px;font-size:21.5px;color:#222;transform:scaleX(0.9183);transform-origin:0 0;-webkit-text-stroke:0.3px #f4f4f4;">Show Me</div>
<div class="t" style="left:27.80px;top:135.14px;font-size:20.5px;color:#111;font-weight:bold;transform:scaleX(0.9835);transform-origin:0 0;-webkit-text-stroke:0.0px #ffffff;">Data</div>
<div class="t" style="left:139.00px;top:135.14px;font-size:20.5px;color:#222;letter-spacing:0.055px;-webkit-text-stroke:0.3px #f8f8f8;">Analytics</div>
<div class="t" style="left:53.50px;top:176.59px;font-size:19.5px;color:#333;transform:scaleX(0.9330);transform-origin:0 0;-webkit-text-stroke:0.3px #ffffff;">T5_T_Revised+ (mrsd_20...</div>
<div class="t" style="left:23.00px;top:227.84px;font-size:18.5px;color:#9a9a9a;transform:scaleX(0.9622);transform-origin:0 0;-webkit-text-stroke:0.3px #ffffff;">Search</div>
<div class="t" style="left:27.40px;top:268.64px;font-size:20.5px;color:#111;font-weight:bold;transform:scaleX(0.9776);transform-origin:0 0;-webkit-text-stroke:0.0px #ffffff;">Tables</div>
<div class="t" style="left:57.60px;top:302.44px;font-size:20.5px;color:#111;font-weight:bold;transform:scaleX(0.8564);transform-origin:0 0;-webkit-text-stroke:0.0px #ffffff;">T5_Sex_Revised</div>
<div class="t" style="left:79.40px;top:335.41px;font-size:19px;color:#222;transform:scaleX(0.9140);transform-origin:0 0;-webkit-text-stroke:0.3px #ffffff;">Age</div>
<div class="t" style="left:79.40px;top:366.21px;font-size:19px;color:#222;transform:scaleX(0.9071);transform-origin:0 0;-webkit-text-stroke:0.3px #ffffff;">Sex</div>
<div class="t" style="left:79.40px;top:400.41px;font-size:19px;color:#222;transform:scaleX(0.9840);transform-origin:0 0;-webkit-text-stroke:0.3px #ffffff;">2009 (T5!Sex!Revised)</div>
<div class="t" style="left:79.40px;top:431.31px;font-size:19px;color:#222;transform:scaleX(0.9624);transform-origin:0 0;-webkit-text-stroke:0.3px #ffffff;">2019 (T5!Sex!Revised)</div>
<div class="t" style="left:79.40px;top:461.91px;font-size:19px;color:#222;font-style:italic;transform:scaleX(0.9610);transform-origin:0 0;-webkit-text-stroke:0.3px #ffffff;">T5_Sex_Revised (Count)</div>
<div class="t" style="left:57.60px;top:504.64px;font-size:20.5px;color:#111;font-weight:bold;transform:scaleX(0.8537);transform-origin:0 0;-webkit-text-stroke:0.0px #ffffff;">T5_T_Revised</div>
<div class="t" style="left:79.40px;top:537.81px;font-size:19px;color:#222;transform:scaleX(0.9140);transform-origin:0 0;-webkit-text-stroke:0.3px #ffffff;">Age</div>
<div class="t" style="left:79.40px;top:571.51px;font-size:19px;color:#222;letter-spacing:0.409px;-webkit-text-stroke:0.3px #ffffff;">2009</div>
<div class="t" style="left:79.40px;top:602.41px;font-size:19px;color:#222;transform:scaleX(0.9511);transform-origin:0 0;-webkit-text-stroke:0.3px #ffffff;">2019</div>
<div class="t" style="left:79.40px;top:633.01px;font-size:19px;color:#222;transform:scaleX(0.9774);transform-origin:0 0;-webkit-text-stroke:0.3px #ffffff;">Difference</div>
<div class="t" style="left:79.40px;top:663.91px;font-size:19px;color:#222;font-style:italic;transform:scaleX(0.9641);transform-origin:0 0;-webkit-text-stroke:0.3px #ffffff;">T5_T_Revised (Count)</div>
<div class="t" style="left:58.50px;top:708.51px;font-size:19px;color:#222;font-style:italic;transform:scaleX(0.9599);transform-origin:0 0;-webkit-text-stroke:0.3px #ffffff;">Measure Names</div>
<div class="t" style="left:58.50px;top:742.21px;font-size:19px;color:#222;transform:scaleX(0.9193);transform-origin:0 0;-webkit-text-stroke:0.3px #ffffff;">Axis</div>
<div class="t" style="left:58.50px;top:773.11px;font-size:19px;color:#222;font-style:italic;transform:scaleX(0.9576);transform-origin:0 0;-webkit-text-stroke:0.3px #ffffff;">Measure Values</div>
<div class="t" style="left:333.40px;top:137.79px;font-size:19.5px;color:#333;transform:scaleX(0.9043);transform-origin:0 0;-webkit-text-stroke:0.3px #f8f8f8;">Pages</div>
<div class="t" style="left:333.40px;top:233.99px;font-size:19.5px;color:#333;transform:scaleX(0.9532);transform-origin:0 0;-webkit-text-stroke:0.3px #f8f8f8;">Filters</div>
<div class="t" style="left:333.40px;top:354.89px;font-size:19.5px;color:#333;transform:scaleX(0.9532);transform-origin:0 0;-webkit-text-stroke:0.3px #f8f8f8;">Marks</div>
<div class="t" style="left:366.70px;top:398.64px;font-size:20.5px;color:#111;font-weight:bold;transform:scaleX(0.8971);transform-origin:0 0;-webkit-text-stroke:0.0px #f8f8f8;">All</div>
<div class="t" style="left:366.50px;top:448.08px;font-size:17.5px;color:#333;transform:scaleX(0.9535);transform-origin:0 0;-webkit-text-stroke:0.3px #f8f8f8;">Multiple</div>
<div class="t" style="left:340.70px;top:522.18px;font-size:17.5px;color:#222;transform:scaleX(0.9369);transform-origin:0 0;-webkit-text-stroke:0.3px #f8f8f8;">Colour</div>
<div class="t" style="left:423.80px;top:522.18px;font-size:17.5px;color:#222;transform:scaleX(0.8724);transform-origin:0 0;-webkit-text-stroke:0.3px #f8f8f8;">Size</div>
<div class="t" style="left:493.00px;top:522.18px;font-size:17.5px;color:#222;transform:scaleX(0.8921);transform-origin:0 0;-webkit-text-stroke:0.3px #f8f8f8;">Label</div>
<div class="t" style="left:344.80px;top:593.98px;font-size:17.5px;color:#222;transform:scaleX(0.9097);transform-origin:0 0;-webkit-text-stroke:0.3px #f8f8f8;">Detail</div>
<div class="t" style="left:413.50px;top:593.98px;font-size:17.5px;color:#222;transform:scaleX(0.9983);transform-origin:0 0;-webkit-text-stroke:0.3px #f8f8f8;">Tooltip</div>
<div class="t" style="left:385.70px;top:634.21px;font-size:19px;color:#222;letter-spacing:0.200px;-webkit-text-stroke:0.3px #222;">Multiple fields</div>
<div class="t" style="left:385.70px;top:668.21px;font-size:19px;color:#222;letter-spacing:0.200px;-webkit-text-stroke:0.3px #222;">Multiple fields</div>
<div class="t" style="left:366.50px;top:741.79px;font-size:19.5px;color:#222;letter-spacing:0.739px;-webkit-text-stroke:0.3px #f8f8f8;">SUM(2009 (T5!...</div>
<div class="t" style="left:366.50px;top:789.69px;font-size:19.5px;color:#222;letter-spacing:0.333px;-webkit-text-stroke:0.3px #f8f8f8;">AGG(Axis)</div>
<div class="t" style="left:366.50px;top:837.59px;font-size:19.5px;color:#222;letter-spacing:0.452px;-webkit-text-stroke:0.3px #f8f8f8;">SUM(2019 (T5!S...</div>
<div class="t" style="left:595.40px;top:135.99px;font-size:19.5px;color:#333;transform:scaleX(0.9461);transform-origin:0 0;-webkit-text-stroke:0.3px #f8f8f8;">Columns</div>
<div class="t" style="left:595.40px;top:183.99px;font-size:19.5px;color:#333;transform:scaleX(0.9085);transform-origin:0 0;-webkit-text-stroke:0.3px #f8f8f8;">Rows</div>
<div class="t" style="left:761.50px;top:136.41px;font-size:19px;color:#ffffff;transform:scaleX(0.9991);transform-origin:0 0;-webkit-text-stroke:0.3px #02b180;">SUM(2009 (T5!Sex!R..</div>
<div class="t" style="left:986.50px;top:136.41px;font-size:19px;color:#ffffff;transform:scaleX(0.9694);transform-origin:0 0;-webkit-text-stroke:0.3px #02b180;">AGG(Axis)</div>
<div class="t" style="left:1211.50px;top:136.41px;font-size:19px;color:#ffffff;transform:scaleX(0.9783);transform-origin:0 0;-webkit-text-stroke:0.3px #02b180;">SUM(2019 (T5!Sex!R..</div>
<div class="t" style="left:762.00px;top:184.41px;font-size:19px;color:#ffffff;transform:scaleX(0.9317);transform-origin:0 0;-webkit-text-stroke:0.3px #4a94b3;">Age</div>
<div class="t" style="left:28.60px;top:1317.99px;font-size:19.5px;color:#555;transform:scaleX(0.9318);transform-origin:0 0;-webkit-text-stroke:0.3px #e6e6e6;">Data Source</div>
<div class="t" style="left:205.50px;top:1317.99px;font-size:19.5px;color:#666;transform:scaleX(0.8996);transform-origin:0 0;-webkit-text-stroke:0.3px #e6e6e6;">Sheet1</div>
<div class="t" style="left:283.00px;top:1317.99px;font-size:19.5px;color:#444;font-weight:bold;transform:scaleX(0.9371);transform-origin:0 0;-webkit-text-stroke:0.0px #f8f8f8;">Sheet 2</div>
<div class="t" style="left:387.5px;top:1319px;font-size:17px;color:#666;letter-spacing:0.3px;">仪表板</div>
<div class="t" style="left:443.50px;top:1317.99px;font-size:19.5px;color:#666;-webkit-text-stroke:0.3px #e6e6e6;">1</div>
<div class="t" style="left:4.00px;top:1357.51px;font-size:17px;color:#222;transform:scaleX(0.9899);transform-origin:0 0;-webkit-text-stroke:0.3px #ececec;">60 marks</div>
<div class="t" style="left:99.40px;top:1357.51px;font-size:17px;color:#222;transform:scaleX(0.9489);transform-origin:0 0;-webkit-text-stroke:0.3px #ececec;">12 rows by 3 columns</div>
<div class="t" style="left:281.00px;top:1357.51px;font-size:17px;color:#222;transform:scaleX(0.9713);transform-origin:0 0;-webkit-text-stroke:0.3px #ececec;">SUM(2009 (T5!Sex!Revised)): 1,492.90</div>
<div class="t" style="left:895.80px;top:1356.66px;font-size:18px;color:#333;transform:scaleX(0.9370);transform-origin:0 0;-webkit-text-stroke:0.3px #ececec;">RStudio</div>
<div class="t" style="left:1704.60px;top:1357.08px;font-size:17.5px;color:#222;transform:scaleX(0.9250);transform-origin:0 0;-webkit-text-stroke:0.3px #ececec;">Tang Haozheng</div>
<svg style="left:0;top:0;" width="2160" height="1378" viewBox="0 0 2160 1378"><rect x="3" y="6" width="21" height="21" fill="#fff"/><rect x="4.5" y="7.5" width="18" height="18" fill="#f0f0f0"/><path d="M10.1 16.5H16.9M13.5 13.1V19.9" stroke="#2e7fb8" stroke-width="1.3" fill="none"/><path d="M7.1 12.5H11.9M9.5 10.1V14.9" stroke="#2e7fb8" stroke-width="1.3" fill="none"/><path d="M15.1 12.5H19.9M17.5 10.1V14.9" stroke="#2e7fb8" stroke-width="1.3" fill="none"/><path d="M7.1 20.5H11.9M9.5 18.1V22.9" stroke="#2e7fb8" stroke-width="1.3" fill="none"/><path d="M15.1 20.5H19.9M17.5 18.1V22.9" stroke="#2e7fb8" stroke-width="1.3" fill="none"/><path d="M12.0 9.2H15.0M13.5 7.699999999999999V10.7" stroke="#2e7fb8" stroke-width="1.3" fill="none"/><path d="M12.0 23.6H15.0M13.5 22.1V25.1" stroke="#2e7fb8" stroke-width="1.3" fill="none"/><path d="M4.9 16.5H7.9M6.4 15.0V18.0" stroke="#2e7fb8" stroke-width="1.3" fill="none"/><path d="M19.1 16.5H22.1M20.6 15.0V18.0" stroke="#2e7fb8" stroke-width="1.3" fill="none"/><path d="M1976 16.5H1991" stroke="#fff" stroke-width="1"/><path d="M2048.5 12.5V9.5H2059.5V20.5H2056.5" stroke="#fff" stroke-width="1" fill="none"/><rect x="2045.5" y="12.5" width="11" height="11" stroke="#fff" stroke-width="1" fill="none"/><path d="M2116 9L2131 24M2131 9L2116 24" stroke="#fff" stroke-width="1"/><rect x="8" y="58" width="9" height="1" fill="#000"/><rect x="50" y="58" width="13" height="1" fill="#000"/><rect x="102" y="58" width="15" height="1" fill="#000"/><rect x="231" y="58" width="10" height="1" fill="#000"/><rect x="318" y="58" width="6" height="1" fill="#000"/><rect x="364" y="58" width="12" height="1" fill="#000"/><rect x="444" y="58" width="15" height="1" fill="#000"/><rect x="512" y="58" width="10" height="1" fill="#000"/><rect x="569" y="58" width="11" height="1" fill="#000"/><rect x="651" y="58" width="10" height="1" fill="#000"/><rect x="716" y="58" width="13" height="1" fill="#000"/><path d="M31.2 93.7H37.8M34.5 90.4V97.0" stroke="#e8762b" stroke-width="1.3" fill="none"/><path d="M28.3 89.4H32.9M30.6 87.10000000000001V91.7" stroke="#eb912b" stroke-width="1.3" fill="none"/><path d="M36.2 89.4H40.8M38.5 87.10000000000001V91.7" stroke="#5b879b" stroke-width="1.3" fill="none"/><path d="M28.3 97.6H32.9M30.6 95.3V99.89999999999999" stroke="#c72037" stroke-width="1.3" fill="none"/><path d="M36.2 97.6H40.8M38.5 95.3V99.89999999999999" stroke="#1f457e" stroke-width="1.3" fill="none"/><path d="M33.2 86.3H35.8M34.5 85.0V87.6" stroke="#7099a6" stroke-width="1.3" fill="none"/><path d="M33.2 100.6H35.8M34.5 99.3V101.89999999999999" stroke="#7e6fa8" stroke-width="1.3" fill="none"/><path d="M26.2 93.7H28.8M27.5 92.4V95.0" stroke="#7099a6" stroke-width="1.3" fill="none"/><path d="M40.2 93.7H42.8M41.5 92.4V95.0" stroke="#59568a" stroke-width="1.3" fill="none"/><rect x="69.0" y="78" width="1" height="35" fill="#cfcfcf"/><rect x="398.0" y="78" width="1" height="35" fill="#cfcfcf"/><rect x="583.0" y="78" width="1" height="35" fill="#cfcfcf"/><rect x="746.0" y="78" width="1" height="35" fill="#cfcfcf"/><rect x="1157.0" y="78" width="1" height="35" fill="#cfcfcf"/><rect x="1284.0" y="78" width="1" height="35" fill="#cfcfcf"/><path d="M101 87.5L94.5 94L101 100.5M94.5 94H110" stroke="#666" stroke-width="1.9" fill="none" stroke-linecap="round" stroke-linejoin="round"/><path d="M151 87.5L157.5 94L151 100.5M157.5 94H142" stroke="#b4b4b4" stroke-width="1.9" fill="none" stroke-linecap="round" stroke-linejoin="round"/><rect x="190.5" y="86.5" width="15" height="15" rx="1" stroke="#666" stroke-width="1.2" fill="none"/><rect x="194.5" y="96.5" width="7" height="5" stroke="#666" stroke-width="1" fill="none"/><rect x="196" y="98" width="3" height="3.5" fill="#555"/><ellipse cx="244.75" cy="88.6" rx="5.25" ry="2.6" stroke="#666" stroke-width="1.1" fill="none"/><path d="M239.5 88.6V97.9A5.25 2.6 0 0 0 244.225 100.5" stroke="#666" stroke-width="1.1" fill="none"/><path d="M250.0 88.6V94.7" stroke="#666" stroke-width="1.1" fill="none"/><path d="M245 100H253M249 96V104" stroke="#222" stroke-width="2.2"/><ellipse cx="291.75" cy="88.6" rx="5.25" ry="2.6" stroke="#666" stroke-width="1.1" fill="none"/><path d="M286.5 88.6V97.9A5.25 2.6 0 0 0 291.225 100.5" stroke="#666" stroke-width="1.1" fill="none"/><path d="M297.0 88.6V94.7" stroke="#666" stroke-width="1.1" fill="none"/><rect x="292.8" y="97.3" width="2" height="6.5" fill="#222"/><rect x="296" y="97.3" width="2" height="6.5" fill="#222"/><path d="M318.75 92.75H324.25L321.5 96.25Z" fill="#555"/><path d="M377.75 92.75H383.25L380.5 96.25Z" fill="#b0b0b0"/><path d="M455.75 92.75H461.25L458.5 96.25Z" fill="#555"/><path d="M562.75 92.75H568.25L565.5 96.25Z" fill="#555"/><path d="M801.75 92.75H807.25L804.5 96.25Z" fill="#555"/><path d="M861.75 92.75H867.25L864.5 96.25Z" fill="#b8b8b8"/><path d="M1212.75 92.75H1218.25L1215.5 96.25Z" fill="#555"/><path d="M343.5 92A7.5 7.5 0 0 1 357 90.5M358 95.5A7.5 7.5 0 0 1 344.5 97.5" stroke="#b4b4b4" stroke-width="1.3" fill="none"/><path d="M359 87.5L358.5 92.5L354 91Z M342 100.5L342.5 95.5L347 97.5Z" fill="#b4b4b4"/><path d="M429.8 101.5H420.5V86.5H436.0V96.25" stroke="#666" stroke-width="1.2" fill="none"/><rect x="423.5" y="95.5" width="1.8" height="3.8" fill="#666"/><rect x="427.3" y="90.5" width="1.8" height="8.8" fill="#666"/><rect x="431" y="92.3" width="1.8" height="4" fill="#666"/><path d="M431.5 100H439M435.2 96.2V103.8" stroke="#222" stroke-width="2"/><rect x="487.5" y="85.5" width="10.5" height="9" rx="1" stroke="#666" stroke-width="1.1" fill="none"/><path d="M485.5 91.5H481.5V100.5H491.5V95" stroke="#666" stroke-width="1.1" fill="none"/><path d="M490.2 93V89.5M492.5 93V87.5M494.8 93V89.8M484 98.8V96M486.2 98.8V96M488.4 98.8V96" stroke="#666" stroke-width="0.9"/><path d="M536.8 101.5H527.5V86.5H543.0V96.25" stroke="#666" stroke-width="1.2" fill="none"/><rect x="530.5" y="95.5" width="1.8" height="3.8" fill="#666"/><rect x="534.3" y="90.5" width="1.8" height="8.8" fill="#666"/><rect x="538" y="92.3" width="1.8" height="2.5" fill="#666"/><path d="M538.8 96.8L545.5 103.3M545.5 96.8L538.8 103.3" stroke="#222" stroke-width="2"/><rect x="607.5" y="87.5" width="3" height="3" stroke="#666" stroke-width="1" fill="none"/><rect x="612.5" y="87.5" width="3" height="3" stroke="#666" stroke-width="1" fill="none"/><rect x="617.5" y="87.5" width="3" height="3" stroke="#666" stroke-width="1" fill="none"/><rect x="607.5" y="92.5" width="3" height="3" stroke="#666" stroke-width="1" fill="none"/><rect x="607.5" y="97.5" width="3" height="3" stroke="#666" stroke-width="1" fill="none"/><path d="M614 101.3Q620.5 99.5 622.8 93.5" stroke="#666" stroke-width="1.1" fill="none"/><path d="M624 92L623.8 96L620.8 94Z M612.5 102.5L616.5 100L616 103.5Z" fill="#666"/><path d="M657.6 87V99" stroke="#666" stroke-width="1.1"/><path d="M655 98H660.2L657.6 101.5Z" fill="#666"/><rect x="662.5" y="87.5" width="4" height="3" rx="0.8" stroke="#666" stroke-width="1" fill="none"/><rect x="662.5" y="92.5" width="7" height="3" rx="0.8" stroke="#666" stroke-width="1" fill="none"/><rect x="662.5" y="97.5" width="10" height="3" rx="0.8" stroke="#666" stroke-width="1" fill="none"/><path d="M705.6 87V99" stroke="#666" stroke-width="1.1"/><path d="M703 98H708.2L705.6 101.5Z" fill="#666"/><rect x="710.5" y="87.5" width="10" height="3" rx="0.8" stroke="#666" stroke-width="1" fill="none"/><rect x="710.5" y="92.5" width="7" height="3" rx="0.8" stroke="#666" stroke-width="1" fill="none"/><rect x="710.5" y="97.5" width="4" height="3" rx="0.8" stroke="#666" stroke-width="1" fill="none"/><path d="M775.5 98.5L782 86.8L784 88L777.5 99.7Z" stroke="#555" stroke-width="1" fill="none"/><path d="M775 100.5L774 101" stroke="#555" stroke-width="1"/><rect x="773" y="102.2" width="12" height="1.6" fill="#555"/><path d="M838 88.5L831.5 99A2 2 0 0 0 835 101L841.5 90A3 3 0 0 0 836.5 87L830.5 97" stroke="#bbb" stroke-width="1" fill="none"/><rect x="890.5" y="86.5" width="16" height="14" stroke="#777" stroke-width="1" stroke-dasharray="2 1.5" fill="none"/><text x="898.5" y="98" font-family="Liberation Serif" font-size="12" fill="#444" text-anchor="middle">T</text><path d="M945.5 86.5L950 90.5L947 91.5L944.5 96L945.5 98L938.5 94.8L941 93.5L943.5 89Z M941 96.5L938.5 100.5" stroke="#555" stroke-width="1.1" fill="none" stroke-linejoin="round"/><path d="M1117.0 92.0H1127.0L1122 98.0Z" fill="#555"/><rect x="1180.5" y="87.5" width="4" height="3" rx="0.5" stroke="#666" stroke-width="1" fill="none"/><rect x="1180.5" y="92.8" width="4" height="3" rx="0.5" stroke="#666" stroke-width="1" fill="none"/><rect x="1180.5" y="97.8" width="4" height="3" rx="0.5" stroke="#666" stroke-width="1" fill="none"/><rect x="1186.5" y="87.5" width="13" height="13" rx="0.5" stroke="#666" stroke-width="1.1" fill="none"/><rect x="1189" y="95" width="1.8" height="3.8" fill="#666"/><rect x="1192.5" y="90.5" width="1.8" height="8.3" fill="#666"/><rect x="1195.8" y="92.3" width="1.8" height="6.5" fill="#666"/><rect x="1241" y="87" width="17" height="1.8" fill="#666"/><rect x="1242.5" y="88.5" width="14" height="8" stroke="#666" stroke-width="1.1" fill="none"/><path d="M1249.5 96.5V101.5M1246 101.5H1253" stroke="#666" stroke-width="1.1"/><circle cx="1321" cy="88.8" r="2.4" stroke="#555" stroke-width="1.2" fill="none"/><circle cx="1313" cy="94" r="2.4" stroke="#555" stroke-width="1.2" fill="none"/><circle cx="1321" cy="99.2" r="2.4" stroke="#555" stroke-width="1.2" fill="none"/><path d="M1315 92.8L1319 90.2M1315 95.2L1319 97.8" stroke="#555" stroke-width="1.1"/><rect x="2020" y="86" width="10.8" height="2.8" fill="#7b6791"/><rect x="2020" y="90.2" width="14" height="2.8" fill="#7fa2c9"/><rect x="2020" y="94.2" width="5" height="2.7" fill="#f0a070"/><rect x="2020" y="98.1" width="8" height="2.7" fill="#f26b7c"/><path d="M300 144.3L302.6 140.8L305.2 144.3Z M300 145.3H305.2L302.6 148.5Z" fill="#6a7585"/><path d="M37.5 180A4.3 2 0 0 0 29.3 180V188.5A4.5 2.2 0 0 0 33 190.5" stroke="#555" stroke-width="1" fill="none"/><ellipse cx="37.5" cy="183.2" rx="4.2" ry="2" stroke="#555" stroke-width="1" fill="none"/><path d="M33.3 183.2V186.5M41.7 183.2V185M33.3 190V191.8A4 2 0 0 0 37 193.5" stroke="#555" stroke-width="1" fill="none"/><path d="M31.5 185.5V187A2.5 1.5 0 0 0 35 188.3H36" stroke="#555" stroke-width="1" fill="none"/><path d="M36 186.5L37.8 188.2L36 190Z" fill="#555"/><circle cx="41.5" cy="190.5" r="3.5" fill="#2e7d9e"/><path d="M39.8 190.5L41.1 191.8L43.4 189.3" stroke="#fff" stroke-width="0.9" fill="none"/><circle cx="224" cy="234.8" r="2.7" stroke="#555" stroke-width="1.1" fill="none"/><path d="M222.1 236.8L218.8 240" stroke="#555" stroke-width="1.2"/><path d="M240.5 231.8H252.5L247.8 237.3V242.2H245.2V237.3Z" stroke="#666" stroke-width="1.1" fill="none" stroke-linejoin="round"/><path d="M268 232.5H270M271 232.5H274.5M275.5 232.5H280" stroke="#666" stroke-width="1.2"/><path d="M268 235.2H270M271 235.2H274.5M275.5 235.2H280" stroke="#666" stroke-width="1.2"/><path d="M268 237.9H270M271 237.9H274.5M275.5 237.9H280" stroke="#666" stroke-width="1.2"/><path d="M268 240.6H270M271 240.6H274.5M275.5 240.6H280" stroke="#666" stroke-width="1.2"/><path d="M289.8 234.9H296.8L293.3 239.1Z" fill="#555"/><path d="M15.0 312L18.5 315.8L22.0 312" stroke="#666" stroke-width="1.1" fill="none"/><rect x="32.3" y="309.5" width="9.5" height="8.5" rx="0.8" stroke="#777" stroke-width="1" fill="none"/><path d="M32.8 312.2H41.8M32.8 314.6H41.8M35.5 312V318M38.6 312V318" stroke="#999" stroke-width="0.8"/><path d="M15.0 513.8L18.5 517.5999999999999L22.0 513.8" stroke="#666" stroke-width="1.1" fill="none"/><rect x="32.3" y="511.0" width="9.5" height="8.5" rx="0.8" stroke="#777" stroke-width="1" fill="none"/><path d="M32.8 513.7H41.8M32.8 516.1H41.8M35.5 513.5V519.5M38.6 513.5V519.5" stroke="#999" stroke-width="0.8"/><text x="50.8" y="348.3" font-family="Liberation Sans" font-size="9.5" font-weight="bold" fill="#3a7a9c" textLength="16" lengthAdjust="spacingAndGlyphs">Abc</text><text x="50.8" y="379.40000000000003" font-family="Liberation Sans" font-size="9.5" font-weight="bold" fill="#3a7a9c" textLength="16" lengthAdjust="spacingAndGlyphs">Abc</text><path d="M57 405V415M61 405V415M54 408.5H64M54 412.5H64" stroke="#3f9e72" stroke-width="1.2"/><path d="M57 435V445M61 435V445M54 438.5H64M54 442.5H64" stroke="#3f9e72" stroke-width="1.2"/><path d="M57 466V476M61 466V476M54 469.5H64M54 473.5H64" stroke="#3f9e72" stroke-width="1.2"/><text x="50.8" y="550.3000000000001" font-family="Liberation Sans" font-size="9.5" font-weight="bold" fill="#3a7a9c" textLength="16" lengthAdjust="spacingAndGlyphs">Abc</text><path d="M57 575V585M61 575V585M54 578.5H64M54 582.5H64" stroke="#3f9e72" stroke-width="1.2"/><path d="M57 607V617M61 607V617M54 610.5H64M54 614.5H64" stroke="#3f9e72" stroke-width="1.2"/><path d="M57 668V678M61 668V678M54 671.5H64M54 675.5H64" stroke="#3f9e72" stroke-width="1.2"/><path d="M57 637V647M61 637V647M54 640.5H64M54 644.5H64" stroke="#3f9e72" stroke-width="1.2"/><path d="M50 641.5H52.5M50 643.5H52.5" stroke="#3f9e72" stroke-width="1"/><text x="29" y="721.1" font-family="Liberation Sans" font-size="9.5" font-weight="bold" fill="#3a7a9c" textLength="16" lengthAdjust="spacingAndGlyphs">Abc</text><path d="M35 746V756M39 746V756M32 749.5H42M32 753.5H42" stroke="#3f9e72" stroke-width="1.2"/><path d="M28 750.5H30.5M28 752.5H30.5" stroke="#3f9e72" stroke-width="1"/><path d="M35 777V787M39 777V787M32 780.5H42M32 784.5H42" stroke="#3f9e72" stroke-width="1.2"/><path d="M526.5 454.0H535.5L531 459.0Z" fill="#555"/><circle cx="359.3" cy="495.2" r="4.1" fill="#7c6a9a"/><circle cx="369.8" cy="495.2" r="4.1" fill="#ef6f7f"/><circle cx="359.3" cy="505.7" r="4.1" fill="#f0a070"/><circle cx="369.8" cy="505.7" r="4.1" fill="#7fa3c8"/><circle cx="440.5" cy="499.2" r="8.2" stroke="#666" stroke-width="1.3" fill="none"/><circle cx="434.1" cy="505.3" r="5.1" stroke="#666" stroke-width="1.3" fill="#f8f8f8"/><rect x="502.2" y="492.8" width="19.5" height="16.2" rx="0.8" stroke="#666" stroke-width="1.3" fill="none"/><text x="512" y="506" font-family="Liberation Serif" font-size="14" font-weight="bold" fill="#666" text-anchor="middle">T</text><circle cx="364.4" cy="567.8" r="3.3" fill="#666"/><circle cx="356.3" cy="577" r="2.7" stroke="#666" stroke-width="1.1" fill="none"/><circle cx="364.4" cy="577" r="2.7" stroke="#666" stroke-width="1.1" fill="none"/><circle cx="372.7" cy="577" r="2.7" stroke="#666" stroke-width="1.1" fill="none"/><path d="M429.3 564H448.7V577H443V582L438 577H429.3Z" stroke="#666" stroke-width="1.3" fill="none" stroke-linejoin="round"/><rect x="347.5" y="637.5" width="12.5" height="11" stroke="#666" stroke-width="1" fill="none"/><text x="353.7" y="646.5" font-family="Liberation Serif" font-size="9.5" fill="#555" text-anchor="middle">T</text><circle cx="350" cy="672.4" r="2.8" fill="#8a7ba5"/><circle cx="357.9" cy="672.4" r="2.8" fill="#f07a88"/><circle cx="350" cy="680.7" r="2.8" fill="#f0a880"/><circle cx="357.9" cy="680.7" r="2.8" fill="#87a8cc"/><rect x="339.3" y="749.3" width="2.2" height="7" rx="1" stroke="#777" stroke-width="0.9" fill="none"/><rect x="343.6" y="750.8" width="2.2" height="5.5" rx="1" stroke="#777" stroke-width="0.9" fill="none"/><rect x="347.8" y="745.3" width="2.2" height="11" rx="1" stroke="#777" stroke-width="0.9" fill="none"/><rect x="339.3" y="845.3" width="2.2" height="7" rx="1" stroke="#777" stroke-width="0.9" fill="none"/><rect x="343.6" y="846.8" width="2.2" height="5.5" rx="1" stroke="#777" stroke-width="0.9" fill="none"/><rect x="347.8" y="841.3" width="2.2" height="11" rx="1" stroke="#777" stroke-width="0.9" fill="none"/><rect x="338.5" y="793.5" width="13" height="11" stroke="#777" stroke-width="1" fill="none"/><text x="345" y="802.5" font-family="Liberation Serif" font-size="9.5" fill="#666" text-anchor="middle">T</text><rect x="574" y="138.2" width="2.2" height="1.8" fill="#555"/><rect x="574" y="141.2" width="2.2" height="8.7" fill="#555"/><rect x="578" y="138.2" width="2.2" height="1.8" fill="#555"/><rect x="578" y="141.2" width="2.2" height="8.7" fill="#555"/><rect x="582" y="138.2" width="2.2" height="1.8" fill="#555"/><rect x="582" y="141.2" width="2.2" height="8.7" fill="#555"/><rect x="573" y="187" width="2" height="2" fill="#555"/><rect x="576.2" y="187" width="8.8" height="2" fill="#555"/><rect x="573" y="191" width="2" height="2" fill="#555"/><rect x="576.2" y="191" width="8.8" height="2" fill="#555"/><rect x="573" y="195" width="2" height="2" fill="#555"/><rect x="576.2" y="195" width="8.8" height="2" fill="#555"/><ellipse cx="17" cy="1322.5" rx="3.6" ry="1.5" stroke="#555" stroke-width="1" fill="none"/><path d="M13.4 1322.5V1330A3.6 1.5 0 0 0 20.6 1330V1322.5" stroke="#555" stroke-width="1" fill="none"/><rect x="370.7" y="1321.5" width="10" height="10" rx="0.8" stroke="#555" stroke-width="1" fill="none"/><path d="M375.7 1321.5V1331.5M370.7 1326.5H380.7" stroke="#555" stroke-width="1"/><path d="M480.5 1330.5H475.5V1320.5H486V1326" stroke="#555" stroke-width="1" fill="none"/><path d="M478 1328V1326M480 1328V1323.5M482 1328V1325" stroke="#555" stroke-width="0.9"/><path d="M482.3 1331H489.7M486 1327.3V1334.7" stroke="#444" stroke-width="1.6"/><path d="M513 1330.5H507.5V1320.5H517.5V1326M507.5 1325.5H517.5M512.5 1320.5V1330.5" stroke="#555" stroke-width="1" fill="none"/><path d="M514.3 1331H521.7M518 1327.3V1334.7" stroke="#444" stroke-width="1.6"/><path d="M539.3 1320.5V1329L543.5 1331V1322.5L539.3 1320.5M543.5 1322.5L549 1320.5V1326" stroke="#555" stroke-width="1" fill="none"/><path d="M546.3 1331H553.7M550 1327.3V1334.7" stroke="#444" stroke-width="1.6"/><circle cx="1689" cy="1360" r="2.6" stroke="#666" stroke-width="1" fill="none"/><path d="M1684.5 1369.5V1367.5A4.5 3 0 0 1 1693.5 1367.5V1369.5Z" stroke="#666" stroke-width="1" fill="none"/><path d="M1843.5 1362.6H1851.5L1847.5 1366.6Z" fill="#222"/><path d="M2022 1358.5V1367.5" stroke="#bbb" stroke-width="1.2"/><path d="M2028.5 1358.5V1367.5L2023.5 1363Z" fill="#bbb"/><path d="M2044.5 1358.5V1367.5L2039 1363Z" fill="#bbb"/><path d="M2054.5 1358.5V1367.5L2060 1363Z" fill="#bbb"/><path d="M2070 1358.5V1367.5L2075.5 1363Z" fill="#bbb"/><path d="M2077 1358.5V1367.5" stroke="#bbb" stroke-width="1.2"/><rect x="2096.5" y="1359.5" width="2.6" height="2.6" fill="#aaa"/><rect x="2096.5" y="1363.1" width="2.6" height="2.6" fill="#aaa"/><rect x="2096.5" y="1366.7" width="2.6" height="2.6" fill="#aaa"/><rect x="2100.1" y="1359.5" width="2.6" height="2.6" fill="#aaa"/><rect x="2100.1" y="1363.1" width="2.6" height="2.6" fill="#aaa"/><rect x="2100.1" y="1366.7" width="2.6" height="2.6" fill="#aaa"/><rect x="2103.7" y="1359.5" width="2.6" height="2.6" fill="#aaa"/><rect x="2103.7" y="1363.1" width="2.6" height="2.6" fill="#aaa"/><rect x="2103.7" y="1366.7" width="2.6" height="2.6" fill="#aaa"/><rect x="2119" y="1359.5" width="11" height="6" fill="#aaa"/><rect x="2119" y="1367" width="3" height="3" fill="#aaa"/><rect x="2123" y="1367" width="3" height="3" fill="#aaa"/><rect x="2127" y="1367" width="3" height="3" fill="#aaa"/><rect x="2142" y="1359.3" width="10.8" height="10.7" fill="#555"/></svg>
</body></html>
